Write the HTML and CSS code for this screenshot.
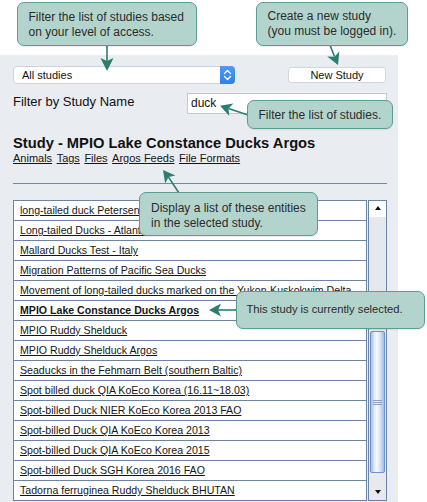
FILE: index.html
```html
<!DOCTYPE html>
<html lang="en">
<head>
<meta charset="utf-8">
<title>Studies</title>
<link rel="stylesheet" href="styles.css">
</head>
<body>
<main class="panel">
  <div class="toolbar">
    <div class="select">
      <span class="select-label">All studies</span>
      <span class="select-stepper">
        <svg width="9" height="12" viewBox="0 0 9 12"><path d="M1.5 4.5 L4.5 1.5 L7.5 4.5 M1.5 7.5 L4.5 10.5 L7.5 7.5" fill="none" stroke="#fff" stroke-width="1.4" stroke-linecap="round" stroke-linejoin="round"/></svg>
      </span>
    </div>
    <div class="new-study">New Study</div>
  </div>
  <div class="filter-row">
    <span class="filter-label">Filter by Study Name</span>
    <div class="filter-input">duck</div>
  </div>
  <h1 class="study-title">Study - MPIO Lake Constance Ducks Argos</h1>
  <nav class="entity-links"><a href="#">Animals</a> <a href="#">Tags</a> <a href="#">Files</a> <a href="#">Argos Feeds</a> <a href="#">File Formats</a></nav>
  <div class="divider"></div>
  <div class="study-table">
    <ul class="study-list">
      <li><a href="#">long-tailed duck Petersen</a></li>
      <li><a href="#">Long-tailed Ducks - Atlantic</a></li>
      <li><a href="#">Mallard Ducks Test - Italy</a></li>
      <li><a href="#">Migration Patterns of Pacific Sea Ducks</a></li>
      <li><a href="#">Movement of long-tailed ducks marked on the Yukon-Kuskokwim Delta</a></li>
      <li class="selected"><a href="#">MPIO Lake Constance Ducks Argos</a></li>
      <li><a href="#">MPIO Ruddy Shelduck</a></li>
      <li><a href="#">MPIO Ruddy Shelduck Argos</a></li>
      <li><a href="#">Seaducks in the Fehmarn Belt (southern Baltic)</a></li>
      <li><a href="#">Spot billed duck QIA KoEco Korea (16.11~18.03)</a></li>
      <li><a href="#">Spot-billed Duck NIER KoEco Korea 2013 FAO</a></li>
      <li><a href="#">Spot-billed Duck QIA KoEco Korea 2013</a></li>
      <li><a href="#">Spot-billed Duck QIA KoEco Korea 2015</a></li>
      <li><a href="#">Spot-billed Duck SGH Korea 2016 FAO</a></li>
      <li><a href="#">Tadorna ferruginea Ruddy Shelduck BHUTAN</a></li>
    </ul>
    <div class="scrollbar">
      <div class="scroll-up"><span class="tri-up"></span></div>
      <div class="scroll-track"></div>
      <div class="scroll-thumb"><span class="grip"></span></div>
      <div class="scroll-down"><span class="tri-down"></span></div>
    </div>
  </div>
</main>

<svg class="arrows" width="427" height="502" viewBox="0 0 427 502">
  <g stroke="#2c7d6f" stroke-width="1.6" fill="none">
    <line x1="107" y1="45" x2="107" y2="61"/>
    <line x1="330" y1="45" x2="334.5" y2="56.5"/>
    <line x1="248" y1="115" x2="228.5" y2="108.6"/>
    <line x1="179" y1="193" x2="168.5" y2="177.1"/>
    <line x1="237" y1="310" x2="218" y2="310"/>
  </g>
  <g fill="#2c7d6f">
    <polygon points="107,71 100.5,58 107,61 113.5,58"/>
    <polygon points="338,65 327.3,56.4 334.5,56.7 339.3,51.4"/>
    <polygon points="220,105.7 233.4,103.5 228.5,108.6 229.2,115.7"/>
    <polygon points="163,170 175.4,175.5 168.5,177.1 165.2,183.5"/>
    <polygon points="209,310 221,303.5 218,310 221,316.5"/>
  </g>
</svg>

<div class="callout callout-access">Filter the list of studies based<br>on your level of access.</div>
<div class="callout callout-create">Create a new study<br>(you must be logged in).</div>
<div class="callout callout-filter">Filter the list of studies.</div>
<div class="callout callout-entities">Display a list of these entities<br>in the selected study.</div>
<div class="callout callout-selected">This study is currently selected.</div>
</body>
</html>
```

FILE: styles.css
```css
html, body {
  margin: 0;
  padding: 0;
}
body {
  position: relative;
  width: 427px;
  height: 502px;
  overflow: hidden;
  background: #ffffff;
  font-family: "Liberation Sans", Arial, Helvetica, sans-serif;
  color: #161616;
}

.panel {
  margin-top: 55px;
  width: 398px;
  height: 447px;
  box-sizing: border-box;
  padding: 11px 11px 0 13px;
  background: #e9ecf1;
  display: flex;
  flex-direction: column;
}

/* top toolbar */
.toolbar {
  display: flex;
  justify-content: space-between;
  align-items: flex-start;
  height: 18px;
}
.select {
  width: 222px;
  height: 18px;
  box-sizing: border-box;
  display: flex;
  background: #fff;
  border: 1px solid #d2d2d2;
  border-radius: 4px;
  font-size: 11px;
}
.select-label {
  flex: 1;
  padding-left: 8px;
  line-height: 16px;
  color: #111;
}
.select-stepper {
  width: 15px;
  margin: -1px -1px -1px 0;
  background: linear-gradient(#4d9bf6, #2f7fea);
  border-radius: 0 4px 4px 0;
  display: flex;
  align-items: center;
  justify-content: center;
}
.new-study {
  width: 98px;
  height: 16px;
  margin: 1px 1px 0 0;
  box-sizing: border-box;
  background: #fff;
  border: 1px solid #d6d6d6;
  border-radius: 3px;
  font-size: 11px;
  line-height: 14px;
  text-align: center;
  color: #111;
}

/* filter row */
.filter-row {
  display: flex;
  justify-content: space-between;
  align-items: flex-start;
  margin-top: 9px;
  height: 21px;
}
.filter-label {
  font-size: 13px;
  line-height: 15px;
  padding-top: 1px;
  color: #111;
}
.filter-input {
  width: 200px;
  height: 21px;
  box-sizing: border-box;
  background: #fff;
  border: 1px solid #c8c8c8;
  padding-left: 3px;
  font-size: 12px;
  line-height: 19px;
  color: #111;
}

/* study heading */
.study-title {
  margin: 21px 0 0;
  font-size: 14.7px;
  line-height: 17px;
  font-weight: bold;
  color: #111;
}
.entity-links {
  display: flex;
  gap: 4.5px;
  font-size: 11px;
  line-height: 13px;
}
.entity-links a {
  color: #161616;
  text-decoration: underline;
}
.divider {
  margin-top: 18px;
  height: 1px;
  background: #7189aa;
}

/* list with scrollbar */
.study-table {
  display: flex;
  gap: 1px;
  margin-top: 16px;
  height: 301px;
}
.study-list {
  width: 354px;
  margin: 0;
  padding: 0;
  list-style: none;
  box-sizing: border-box;
  border: 1px solid #6b84a5;
  border-bottom: none;
  background: #fff;
}
.study-list li {
  height: 19px;
  border-bottom: 1px solid #6b84a5;
  padding-left: 6px;
  font-size: 10.6px;
  line-height: 19px;
  white-space: nowrap;
  overflow: hidden;
}
.study-list a {
  color: #161616;
  text-decoration: underline;
}
.study-list .selected a {
  font-weight: bold;
}

.scrollbar {
  width: 19px;
  height: 301px;
  box-sizing: border-box;
  border: 1px solid #6b84a5;
  display: flex;
  flex-direction: column;
  background: #e5e8ed;
}
.scroll-up {
  height: 16px;
  background: #fff;
  display: flex;
  justify-content: center;
  padding-top: 5px;
  box-sizing: border-box;
}
.tri-up {
  width: 0;
  height: 0;
  border-left: 3.5px solid transparent;
  border-right: 3.5px solid transparent;
  border-bottom: 4px solid #111;
}
.scroll-track {
  height: 114px;
}
.scroll-thumb {
  height: 142px;
  box-sizing: border-box;
  margin: 0 1px;
  border: 1px solid #6f90cc;
  border-radius: 2px;
  background: linear-gradient(to right, #a3bbe6 0%, #dfe8f7 25%, #f7f9fd 45%, #d6e2f5 70%, #a4bbe4 100%);
  display: flex;
  align-items: center;
  justify-content: center;
}
.grip {
  width: 9px;
  height: 5px;
  background: repeating-linear-gradient(#8aa0c6 0 1px, transparent 1px 2px);
}
.scroll-down {
  height: 27px;
  background: #e7e9ed;
  display: flex;
  justify-content: center;
  align-items: flex-end;
  padding-bottom: 6px;
  box-sizing: border-box;
}
.tri-down {
  width: 0;
  height: 0;
  border-left: 3.5px solid transparent;
  border-right: 3.5px solid transparent;
  border-top: 4px solid #111;
}

/* annotation overlays */
.arrows {
  position: absolute;
  left: 0;
  top: 0;
  pointer-events: none;
}
.callout {
  position: absolute;
  box-sizing: border-box;
  background: #b3d4cd;
  border: 1.5px solid #5c9d91;
  border-radius: 7px;
  color: #2b2b2b;
  font-size: 12px;
  line-height: 15px;
  white-space: nowrap;
  box-shadow: 0 1px 1px rgba(0, 0, 0, 0.08);
}
.callout-access {
  left: 17px;
  top: 2px;
  width: 180px;
  height: 44px;
  padding: 6.8px 0 0 10.5px;
}
.callout-create {
  left: 256px;
  top: 2px;
  width: 152px;
  height: 44px;
  padding: 6.4px 0 0 10.5px;
}
.callout-filter {
  left: 247px;
  top: 100px;
  width: 146px;
  height: 29px;
  padding: 6.5px 0 0 10.5px;
}
.callout-entities {
  left: 139px;
  top: 192px;
  width: 179px;
  height: 44px;
  padding: 7.6px 0 0 11px;
}
.callout-selected {
  left: 236px;
  top: 291px;
  width: 189px;
  height: 38px;
  padding: 9.6px 0 0 9.5px;
  font-size: 11.2px;
}
```
